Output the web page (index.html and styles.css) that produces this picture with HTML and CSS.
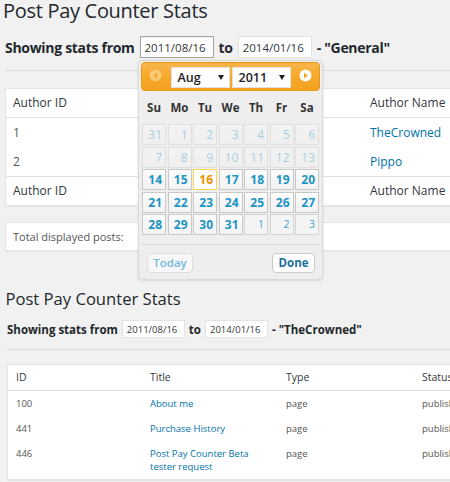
FILE: index.html
```html
<!DOCTYPE html>
<html>
<head>
<meta charset="utf-8">
<title>Post Pay Counter Stats</title>
<link rel="stylesheet" href="styles.css">
</head>
<body>
<section class="stats stats-top">
  <h2 class="title title-lg">Post Pay Counter Stats</h2>
  <div class="range range-lg">
    <span class="lbl">Showing stats from</span>
    <span class="date date-focus">2011/08/16</span>
    <span class="lbl">to</span>
    <span class="date">2014/01/16</span>
    <span class="lbl">- "General"</span>
  </div>
  <hr class="sep sep-lg">
  <table class="tbl authors">
    <colgroup><col class="c-aid"><col class="c-aname"></colgroup>
    <thead><tr><th>Author ID</th><th>Author Name</th></tr></thead>
    <tbody>
      <tr><td>1</td><td><a class="lnk">TheCrowned</a></td></tr>
      <tr><td>2</td><td><a class="lnk">Pippo</a></td></tr>
    </tbody>
    <tfoot><tr><th>Author ID</th><th>Author Name</th></tr></tfoot>
  </table>
  <div class="totals">Total displayed posts:</div>
</section>

<section class="stats stats-bottom">
  <h2 class="title title-sm">Post Pay Counter Stats</h2>
  <div class="range range-sm">
    <span class="lbl">Showing stats from</span>
    <span class="date">2011/08/16</span>
    <span class="lbl">to</span>
    <span class="date">2014/01/16</span>
    <span class="lbl">- "TheCrowned"</span>
  </div>
  <hr class="sep sep-sm">
  <table class="tbl posts">
    <colgroup><col class="c-id"><col class="c-title"><col class="c-type"><col class="c-status"></colgroup>
    <thead><tr><th>ID</th><th>Title</th><th>Type</th><th>Status</th></tr></thead>
    <tbody>
      <tr><td>100</td><td><a class="lnk">About me</a></td><td>page</td><td>publish</td></tr>
      <tr><td>441</td><td><a class="lnk">Purchase History</a></td><td>page</td><td>publish</td></tr>
      <tr><td>446</td><td><a class="lnk">Post Pay Counter Beta tester request</a></td><td>page</td><td>publish</td></tr>
    </tbody>
  </table>
</section>

<div class="dp">
  <div class="dp-head">
    <span class="dp-nav dp-prev">
      <svg width="13" height="13" viewBox="0 0 13 13"><circle cx="6.5" cy="6.5" r="6" fill="#fff"/><path d="M8 3.5 L4 6.5 L8 9.5 Z" fill="#f6a828"/></svg>
    </span>
    <span class="dp-sels">
      <span class="dp-sel">Aug<i class="caret"></i></span>
      <span class="dp-sel">2011<i class="caret"></i></span>
    </span>
    <span class="dp-nav dp-next">
      <svg width="13" height="13" viewBox="0 0 13 13"><circle cx="6.5" cy="6.5" r="6" fill="#fff"/><path d="M5 3.5 L9 6.5 L5 9.5 Z" fill="#f6a828"/></svg>
    </span>
  </div>
  <div class="dp-week">
    <span>Su</span><span>Mo</span><span>Tu</span><span>We</span><span>Th</span><span>Fr</span><span>Sa</span>
  </div>
  <div class="dp-days">
    <span class="d dis">31</span><span class="d dis">1</span><span class="d dis">2</span><span class="d dis">3</span><span class="d dis">4</span><span class="d dis">5</span><span class="d dis">6</span>
    <span class="d dis">7</span><span class="d dis">8</span><span class="d dis">9</span><span class="d dis">10</span><span class="d dis">11</span><span class="d dis">12</span><span class="d dis">13</span>
    <span class="d">14</span><span class="d">15</span><span class="d act">16</span><span class="d">17</span><span class="d">18</span><span class="d">19</span><span class="d">20</span>
    <span class="d">21</span><span class="d">22</span><span class="d">23</span><span class="d">24</span><span class="d">25</span><span class="d">26</span><span class="d">27</span>
    <span class="d">28</span><span class="d">29</span><span class="d">30</span><span class="d">31</span><span class="d om">1</span><span class="d om">2</span><span class="d om">3</span>
  </div>
  <div class="dp-pane">
    <span class="btn btn-today">Today</span>
    <span class="btn btn-done">Done</span>
  </div>
</div>
</body>
</html>
```
FILE: styles.css
```css
* { box-sizing: border-box; }
html, body { margin: 0; padding: 0; }
body {
  width: 450px;
  height: 482px;
  overflow: hidden;
  position: relative;
  background: #f1f1f1;
  font-family: "Open Sans", "Noto Sans", sans-serif;
  color: #444;
}

/* ---------- sections ---------- */
.stats-top { padding-left: 5px; }
.stats-bottom { padding-left: 7px; }

.title { margin: 0; font-weight: 400; color: #23282d; }
.title-lg { margin-left: -2px; font-size: 20px; line-height: 22px; letter-spacing: -0.3px; }
.title-sm { margin: 37.5px 0 0 -1.5px; font-size: 16.6px; line-height: 20px; }

.range { display: flex; align-items: center; white-space: nowrap; }
.range-lg { margin-top: 14px; height: 22px; gap: 5px; font-size: 14px; }
.range-lg .lbl { letter-spacing: -0.3px; }
.range-sm { margin-top: 11.5px; height: 18px; gap: 4px; font-size: 11.5px; }
.lbl { font-weight: 700; color: #23282d; }

.date {
  display: flex;
  align-items: center;
  background: #fff;
  border: 1px solid #e3e3e3;
  color: #32373c;
}
.range-lg .date { height: 22px; width: 74px; padding-left: 4px; font-size: 11.5px; }
.range-lg .date-focus { border-color: #a5a5a5; box-shadow: inset 0 1px 2px rgba(0,0,0,.07); }
.range-sm .date { height: 18px; width: 63px; padding-left: 4px; font-size: 9.5px; }

.sep { margin: 0; border: 0; border-top: 1px solid #dcdcdc; }
.sep-lg { margin-top: 12px; }
.sep-sm { margin-top: 11px; }

/* ---------- tables ---------- */
.tbl {
  border-collapse: separate;
  border-spacing: 0;
  table-layout: fixed;
  background: #fff;
  border: 1px solid #e5e5e5;
  box-shadow: 0 1px 1px rgba(0,0,0,.04);
}
.tbl th, .tbl td { text-align: left; font-weight: 400; vertical-align: top; }
.lnk { color: #0073aa; text-decoration: none; }

.authors { width: 475px; margin-top: 17px; font-size: 12px; }
.c-aid { width: 357px; }
.c-aname { width: 116px; }
.authors th, .authors td { line-height: 16px; padding: 0 7px; }
.authors thead th { padding-top: 6px; padding-bottom: 6px; border-bottom: 1px solid #e1e1e1; color: #32373c; }
.authors tbody td { padding-top: 6.5px; padding-bottom: 6.5px; color: #555; }
.authors tfoot th { padding-top: 6px; padding-bottom: 6px; border-top: 1px solid #e1e1e1; color: #32373c; }

.totals {
  width: 475px;
  height: 29px;
  margin-top: 16px;
  display: flex;
  align-items: center;
  padding: 0 7px;
  background: #fff;
  border: 1px solid #e5e5e5;
  box-shadow: 0 1px 1px rgba(0,0,0,.04);
  font-size: 11px;
  color: #555;
}

.posts { width: 520px; margin-top: 14px; font-size: 9.5px; }
.c-id { width: 134px; }
.c-title { width: 136px; }
.c-type { width: 136px; }
.c-status { width: 112px; }
.posts th, .posts td { line-height: 13px; padding: 6px 8px; }
.posts thead th { font-size: 10.5px; color: #32373c; border-bottom: 1px solid #e1e1e1; }
.posts td { color: #555; }

/* ---------- datepicker popup ---------- */
.dp {
  position: absolute;
  left: 138px;
  top: 60px;
  width: 185px;
  padding: 1px 2px 0;
  background: #eee;
  border: 1px solid #dadada;
  border-radius: 4px;
  box-shadow: 0 1px 3px rgba(0,0,0,.10);
  color: #333;
}
.dp-head {
  height: 29px;
  display: flex;
  align-items: center;
  justify-content: space-between;
  padding: 0 7px;
  background: linear-gradient(#f8b64a, #f6a828 55%, #f3a120);
  border: 1px solid #e99613;
  border-radius: 4px;
}
.dp-nav { display: flex; width: 13px; height: 13px; margin-top: -2px; }
.dp-prev { opacity: .35; }
.dp-sels { display: flex; gap: 2px; margin-top: 1px; }
.dp-sel {
  width: 59px;
  height: 21px;
  display: flex;
  align-items: center;
  justify-content: space-between;
  padding: 0 5px 0 6px;
  background: #fff;
  border: 1px solid #e0e0e0;
  font-size: 12.5px;
  font-weight: 600;
  color: #222;
}
.caret {
  width: 0;
  height: 0;
  border-left: 3px solid transparent;
  border-right: 3px solid transparent;
  border-top: 5px solid #222;
}

.dp-week {
  display: grid;
  grid-template-columns: repeat(7, 24px);
  column-gap: 1.5px;
  margin: 1px 0 0 1px;
  height: 31px;
  line-height: 31px;
  text-align: center;
  font-size: 11.5px;
  font-weight: 700;
  color: #333;
}
.dp-days {
  display: grid;
  grid-template-columns: repeat(7, 24px);
  grid-auto-rows: 21px;
  gap: 1.5px;
  margin: 1px 0 0 1px;
}
.d {
  border: 1px solid #c8c8c8;
  background: linear-gradient(#fdfdfd, #f2f2f2);
  color: #1c94c4;
  font-size: 12px;
  font-weight: 700;
  line-height: 19px;
  text-align: right;
  padding-right: 3px;
}
.d.dis { opacity: .35; font-weight: 400; }
.d.act { border-color: #fbd850; background: #fff; color: #eb8f00; }
.d.om { font-weight: 400; font-size: 10.5px; color: #4aa3d1; background: #f4f4f4; border-color: #d4d4d4; }

.dp-pane {
  margin-top: 8.5px;
  border-top: 1px solid #d9d9d9;
  padding: 8px 5px 6px 6px;
  display: flex;
  justify-content: space-between;
}
.btn {
  height: 20px;
  display: flex;
  align-items: center;
  justify-content: center;
  border-radius: 4px;
  font-size: 11.5px;
}
.btn-today {
  width: 46px;
  border: 1px solid #dedede;
  background: #f7f7f7;
  color: #72b8df;
  font-weight: 600;
}
.btn-done {
  width: 43px;
  border: 1px solid #cacaca;
  background: #fff;
  color: #20709f;
  font-weight: 700;
}
```
